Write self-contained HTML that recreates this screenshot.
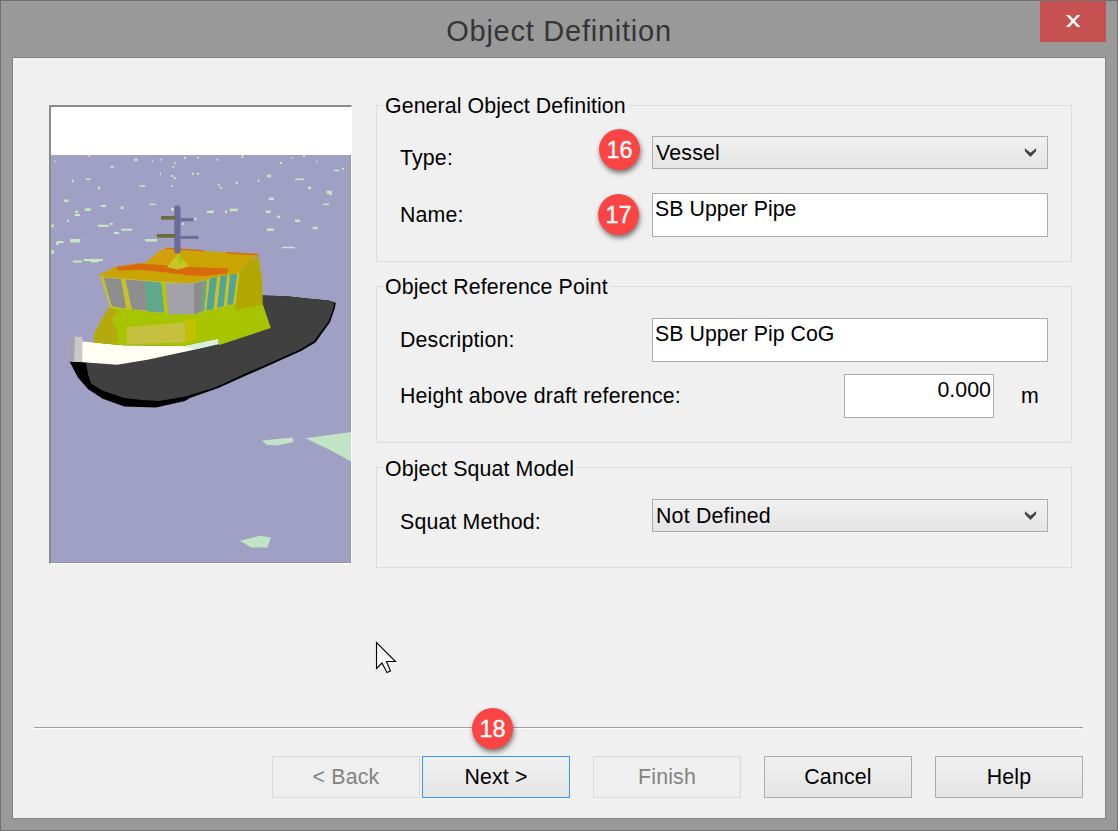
<!DOCTYPE html>
<html><head><meta charset="utf-8"><title>Object Definition</title>
<style>
html,body{margin:0;padding:0;}
body{width:1118px;height:831px;position:relative;overflow:hidden;background:#999999;font-family:"Liberation Sans",sans-serif;font-size:21.33px;letter-spacing:0.16px;color:#000;}
.abs{position:absolute;}
#win{left:0;top:0;width:1116px;height:829px;border:1px solid #6f6f6f;}
#title{left:0;top:13px;width:1118px;text-align:center;font-size:29px;line-height:36px;color:#353535;letter-spacing:0.75px;}
#close{left:1040px;top:1px;width:66px;height:41px;background:#c75050;}
#client{left:12px;top:57px;width:1092px;height:760px;background:#f0f0f0;border:1px solid #838383;}
.grp{border:1px solid #dcdcdc;box-sizing:border-box;}
.lg{background:#f0f0f0;white-space:nowrap;line-height:24px;height:24px;padding:0 2px 0 1px;letter-spacing:.1px;}
.lb{white-space:nowrap;line-height:24px;height:24px;}
.inp{letter-spacing:.03px;background:#fff;border:1px solid #ababab;box-sizing:border-box;white-space:nowrap;line-height:24px;}
.sel{letter-spacing:.2px;background:linear-gradient(#f0f0f0,#e5e5e5);border:1px solid #acacac;box-sizing:border-box;white-space:nowrap;line-height:24px;}
.btn{box-sizing:border-box;width:148px;height:42px;top:756px;border:1px solid #acacac;background:linear-gradient(#f0f0f0,#e5e5e5);text-align:center;line-height:40px;}
.btn.dis{border-color:#d9d9d9;background:#efefef;color:#838383;}
.btn.def{border-color:#3399ff;}
.badge{-webkit-text-stroke:.35px #fff;width:41px;height:41px;border-radius:50%;background:#fb4444;color:#fff;text-align:center;line-height:42px;font-size:23.5px;letter-spacing:0;box-shadow:1px 3px 5px rgba(0,0,0,.5);}
</style></head><body>
<div id="win" class="abs"></div>
<div id="title" class="abs">Object Definition</div>
<div id="close" class="abs"><svg width="66" height="41" viewBox="0 0 66 41"><polygon points="26,14 29.4,14 40.4,26 37,26" fill="#fff"/><polygon points="37,14 40.4,14 29.4,26 26,26" fill="#fff"/></svg></div>
<div id="client" class="abs"></div>

<!-- picture -->
<div id="pic" class="abs" style="left:49px;top:105px;width:303px;height:459px;background:#fff;box-sizing:border-box;border-left:2px solid #8a8a8a;border-top:2px solid #8a8a8a;border-right:1px solid #fff;border-bottom:1px solid #fff;"></div>
<svg id="sea" class="abs" style="left:51px;top:107px;" width="300" height="456" viewBox="51 107 300 456">
<defs><filter id="soft" x="-5%" y="-5%" width="110%" height="110%"><feGaussianBlur stdDeviation="0.45"/></filter></defs>
<rect x="51" y="155" width="300" height="408" fill="#8f9196"/><rect x="51" y="155" width="299.4" height="407.2" fill="#a0a0c4"/>
<g filter="url(#soft)">
<g fill="#c6eabc"><rect x="88.25" y="154.8" width="1.5" height="2"/><rect x="54.25" y="160.55" width="1.5" height="1.5"/><rect x="110.6" y="165.9" width="3" height="2"/><rect x="134.4" y="158.55" width="3" height="2.5"/><rect x="152" y="159.8" width="1" height="2"/><rect x="159.75" y="158.8" width="1.5" height="2"/><rect x="184" y="156.9" width="2" height="2"/><rect x="197" y="156.9" width="2" height="2"/><rect x="174.15" y="162" width="1.5" height="2"/><rect x="172.75" y="166" width="1.5" height="2"/><rect x="160" y="172.55" width="1" height="2.5"/><rect x="171" y="175" width="2" height="2"/><rect x="173.9" y="177.2" width="2" height="2"/><rect x="192" y="172.8" width="2" height="2"/><rect x="197" y="172.8" width="2" height="2"/><rect x="85.8" y="178.55" width="5" height="1.5"/><rect x="71.95" y="179.75" width="1.5" height="2.5"/><rect x="98.1" y="186.55" width="2" height="2.5"/><rect x="139.4" y="185.35" width="6" height="1.5"/><rect x="171" y="185.35" width="2" height="1.5"/><rect x="64.05" y="199.55" width="4.5" height="2.5"/><rect x="100.9" y="204.9" width="5" height="2"/><rect x="84.8" y="208.35" width="6" height="2.5"/><rect x="120.7" y="206.55" width="3" height="2.5"/><rect x="149.5" y="203.65" width="6" height="1.5"/><rect x="75.2" y="210.8" width="3" height="2"/><rect x="74.9" y="214" width="5" height="2"/><rect x="67" y="219.8" width="2" height="2"/><rect x="51.35" y="224.55" width="2.5" height="2.5"/><rect x="97.9" y="224.8" width="11" height="2"/><rect x="109.9" y="222.9" width="3" height="2"/><rect x="121" y="228.7" width="11" height="2"/><rect x="113.9" y="232" width="5" height="2"/><rect x="171.25" y="208" width="2.5" height="3"/><rect x="193.85" y="217.75" width="2.5" height="2.5"/><rect x="181.9" y="222.9" width="2" height="2"/><rect x="70.3" y="238.95" width="10" height="3.5"/><rect x="56.6" y="241.1" width="7" height="2"/><rect x="55.95" y="242.9" width="2.5" height="2"/><rect x="145.1" y="239.05" width="12" height="2.5"/><rect x="51.35" y="249.8" width="2.5" height="4"/><rect x="83.8" y="259" width="19" height="2"/><rect x="72.9" y="260.6" width="9" height="2"/><rect x="90.8" y="260.85" width="8" height="1.5"/><rect x="241.6" y="155" width="2" height="3"/><rect x="216.55" y="158.8" width="1.5" height="2"/><rect x="279.9" y="162" width="2" height="2"/><rect x="291.65" y="157.15" width="1.5" height="1.5"/><rect x="303" y="155" width="2" height="2"/><rect x="316.25" y="160.75" width="1.5" height="1.5"/><rect x="342" y="167.8" width="2" height="2"/><rect x="334" y="169.75" width="5" height="1.5"/><rect x="267" y="174.75" width="4" height="2.5"/><rect x="257.75" y="179.55" width="1.5" height="2.5"/><rect x="235.8" y="181.9" width="2" height="2"/><rect x="217.8" y="183.9" width="2" height="2"/><rect x="219.9" y="186.8" width="2" height="2"/><rect x="295.1" y="178.55" width="9" height="1.5"/><rect x="308" y="186.55" width="3" height="2.5"/><rect x="326.7" y="190.7" width="5" height="3"/><rect x="329.45" y="193" width="2.5" height="2"/><rect x="323.1" y="203.65" width="6" height="1.5"/><rect x="268.7" y="197.55" width="5" height="2.5"/><rect x="206.9" y="210.55" width="7" height="2.5"/><rect x="225" y="210.55" width="2" height="2.5"/><rect x="229.9" y="208.65" width="8" height="2.5"/><rect x="265.8" y="210.55" width="5" height="2.5"/><rect x="276.9" y="215.65" width="3" height="2.5"/><rect x="295" y="219.55" width="5" height="2.5"/><rect x="312.7" y="226.75" width="5" height="2.5"/><rect x="266.8" y="228.45" width="7" height="2.5"/><rect x="281.9" y="246.75" width="13" height="1.5"/></g>
<polygon points="262.2,440.5 292.5,437.6 293.2,441.9 276.6,445.5 266.5,444.8" fill="#c1e3c6"/>
<polygon points="305.5,438.3 351,432 351,461.5 330,450" fill="#c1e3c6"/>
<polygon points="240,540.7 260,535.7 270.7,537.6 267.6,547.6 251.3,547.6" fill="#c1e3c6"/>
<polygon points="69.4,361.2 100,340 262,295.5 286.6,296.2 306.9,298.4 328.5,300.5 335.7,302.7 335,307.8 330,322.2 322.7,332.3 315.5,342.4 301.1,351.1 272.2,364.1 247.8,374.8 218.9,387.8 190,397.9 185,400.9 156.1,407.4 124.3,406.6 102.7,398.7 88.2,389.3 78.1,377.8" fill="#000"/>
<polygon points="86,363 100,340 262,295.5 286.6,296.2 306.9,298.4 328.5,300.5 334,302.7 333.5,307.8 328.5,321.5 321,331.5 314,341 300,349.5 271,362.5 246.5,373 215,387.5 185,396.5 159,400.9 141.6,400.1 124.3,398 102.7,390.8 91.1,383.5 88.2,374.9" fill="#404040"/>
<polygon points="69.4,361.2 82,341.5 123.2,345.3 183.9,346 218.5,338.8 218.5,343.9 188.2,351.1 147.4,359.7 117.1,364.8" fill="#fffff4"/>
<polygon points="183.9,346 218.5,338.8 218.5,343.9 195,349.5" fill="#d8f0dc"/>
<polygon points="67.3,350 69,340 73,336.5 82.4,337 82.4,361.9 69.4,361.2" fill="#c8c8cc"/>
<polygon points="67.3,350 69,340 73,336.5 75,337 74,361.5 69.4,361.2" fill="#a4a4b0"/>
<polygon points="110.2,305 147,309 168,312 194,312 234,302 262.8,304.2 270.8,328 218.8,345.3 218.5,338.8 183.9,346 123.2,345.3 93.6,342.4 94.3,333.8 101.6,319.3" fill="#a6c400"/>
<polygon points="108.8,307.8 118.9,310.6 111.7,319.3 117.4,330.9 117.4,342.8 93.6,342.4 94.3,333.8 101.6,319.3" fill="#b4aa08"/>
<polygon points="126.8,327.3 185.3,322.2 185.3,342.4 126.8,343.9" fill="#c6c040"/>
<polygon points="185.3,319.3 196.1,317.9 196.1,339.5 185.3,342.4" fill="#c4c000"/>
<polygon points="247.7,263 258.5,255.8 262.1,278.9 262.8,304.2 234.7,310.6 239,273.1" fill="#b0a800"/>
<polygon points="100.1,276 155,281 191,283.2 239.5,272.6 235.5,304.2 194,314.3 168,314.3 147,311.4 110.2,307.8" fill="#c8c22c"/>
<polygon points="103.7,277.4 121,278.9 126.1,308.5 111.7,306.3" fill="#8e8e8e"/>
<polygon points="125.4,279.6 144.9,281 147,310.6 131.9,309.2" fill="#8e8e8e"/>
<polygon points="144.9,281 161.5,282.5 164.4,312.8 147,311.4" fill="#5ea88e"/>
<polygon points="165.1,283.2 194,283.2 194,314.3 168,314.3" fill="#a2a2a8"/>
<polygon points="194,283.2 204.1,281 201.2,312.1 194,314.3" fill="#8c8c8c"/>
<polygon points="204.1,281 207,280.3 204.1,311 201.2,312.1" fill="#5ea88e"/>
<polygon points="209.9,278.2 217.1,276.7 213.5,309.2 206.2,310.6" fill="#52a494"/>
<polygon points="220.7,276 227.2,274.8 223.6,306.3 217.1,307.8" fill="#52a494"/>
<polygon points="230.1,274.5 237.3,273.8 233,304.2 227.2,305.6" fill="#52a494"/>
<polygon points="161.5,282.5 165.1,283.2 168,314.3 164.4,312.8" fill="#b4c800"/>
<polygon points="98.3,275.2 116.3,266.5 146.6,262.2 159.6,250.6 166.9,248.5 220,252.1 258.5,254.3 247.7,263 239,273.1 214.2,277.4 191,283.2 155,281 104.4,276.7" fill="#caa406"/>
<polygon points="146.6,262.2 159.6,250.6 166.9,248.5 178,249.5 178,266 150,264" fill="#d2a00c"/>
<polygon points="116,267 140,263.5 168,265.5 190,267 228,268.5 227,273.5 205,276 190,275.5 166,272.5 140,270 118,270.5" fill="#d86a0c"/>
<polygon points="165.4,247.6 204.4,250.2 204.4,251.6 165.4,249" fill="#d86a0c"/>
<polygon points="226,252 258.5,254 258.5,255.5 226,253.5" fill="#d86a0c"/>
<polygon points="166.9,267.3 178.4,253.5 188.5,266.5 177.7,269.4" fill="#c8c628"/>
<polygon points="178.4,253.5 183,259 181,264 178,262" fill="#a8c818"/>
<rect x="174.3" y="205.5" width="6.2" height="48" rx="2" fill="#6a6c9c"/>
<rect x="161.1" y="216" width="14.4" height="3.6" fill="#6c6c38"/>
<rect x="180.4" y="218.2" width="13.2" height="3" fill="#6a6c9c"/>
<rect x="156.8" y="234" width="18.7" height="3.7" fill="#6c6c38"/>
<rect x="180.4" y="235.9" width="18.2" height="2.9" fill="#6a6c9c"/>
</g>
</svg>

<!-- group 1 -->
<div class="abs grp" style="left:376px;top:105px;width:696px;height:157px;"></div>
<div class="abs lg" style="left:384px;top:94px;">General Object Definition</div>
<div class="abs lb" style="left:400px;top:146px;">Type:</div>
<div class="abs lb" style="left:400px;top:203px;">Name:</div>
<div class="abs sel" style="left:652px;top:136px;width:396px;height:33px;"><span class="abs" style="left:3px;top:4px;">Vessel</span></div>
<div class="abs inp" style="left:652px;top:193px;width:396px;height:44px;"><span class="abs" style="left:2px;top:3px;">SB Upper Pipe</span></div>

<svg class="abs" style="left:1024px;top:148px" width="14" height="11" viewBox="0 0 14 11"><polygon points="0.9,0.2 6.5,4.8 12.1,0.2 12.1,3.2 6.5,9.1 0.9,3.2" fill="#444"/></svg>
<!-- group 2 -->
<div class="abs grp" style="left:376px;top:286px;width:696px;height:157px;"></div>
<div class="abs lg" style="left:384px;top:275px;">Object Reference Point</div>
<div class="abs lb" style="left:400px;top:328px;">Description:</div>
<div class="abs lb" style="left:400px;top:384px;">Height above draft reference:</div>
<div class="abs inp" style="left:652px;top:318px;width:396px;height:44px;"><span class="abs" style="left:2px;top:3px;">SB Upper Pip CoG</span></div>
<div class="abs inp" style="left:844px;top:374px;width:150px;height:44px;"><span class="abs" style="right:2px;top:3px;">0.000</span></div>
<div class="abs lb" style="left:1021px;top:384px;">m</div>

<!-- group 3 -->
<div class="abs grp" style="left:376px;top:467px;width:696px;height:101px;"></div>
<div class="abs lg" style="left:384px;top:457px;">Object Squat Model</div>
<div class="abs lb" style="left:400px;top:510px;">Squat Method:</div>
<div class="abs sel" style="left:652px;top:499px;width:396px;height:33px;"><span class="abs" style="left:3px;top:4px;">Not Defined</span></div>

<svg class="abs" style="left:1024px;top:511px" width="14" height="11" viewBox="0 0 14 11"><polygon points="0.9,0.2 6.5,4.8 12.1,0.2 12.1,3.2 6.5,9.1 0.9,3.2" fill="#444"/></svg>
<!-- separator -->
<div class="abs" style="left:34px;top:727px;width:1049px;height:1px;background:#a0a0a0;"></div>
<div class="abs" style="left:34px;top:728px;width:1049px;height:1px;background:#ffffff;"></div>

<!-- buttons -->
<div class="abs btn dis" style="left:272px;">&lt; Back</div>
<div class="abs btn def" style="left:422px;">Next &gt;</div>
<div class="abs btn dis" style="left:593px;">Finish</div>
<div class="abs btn" style="left:764px;">Cancel</div>
<div class="abs btn" style="left:935px;">Help</div>

<svg class="abs" style="left:370px;top:636px" width="32" height="42" viewBox="370 636 32 42"><polygon points="376.5,642.5 376.5,668.5 382,663 387,672.5 390.5,671 386.5,661.5 395.5,661.5" fill="#f8f8f8" stroke="#000" stroke-width="1.1" stroke-linejoin="miter"/></svg>
<!-- badges -->
<div class="abs badge" style="left:599px;top:129px;">16</div>
<div class="abs badge" style="left:598px;top:194px;">17</div>
<div class="abs badge" style="left:472px;top:708px;">18</div>
</body></html>
